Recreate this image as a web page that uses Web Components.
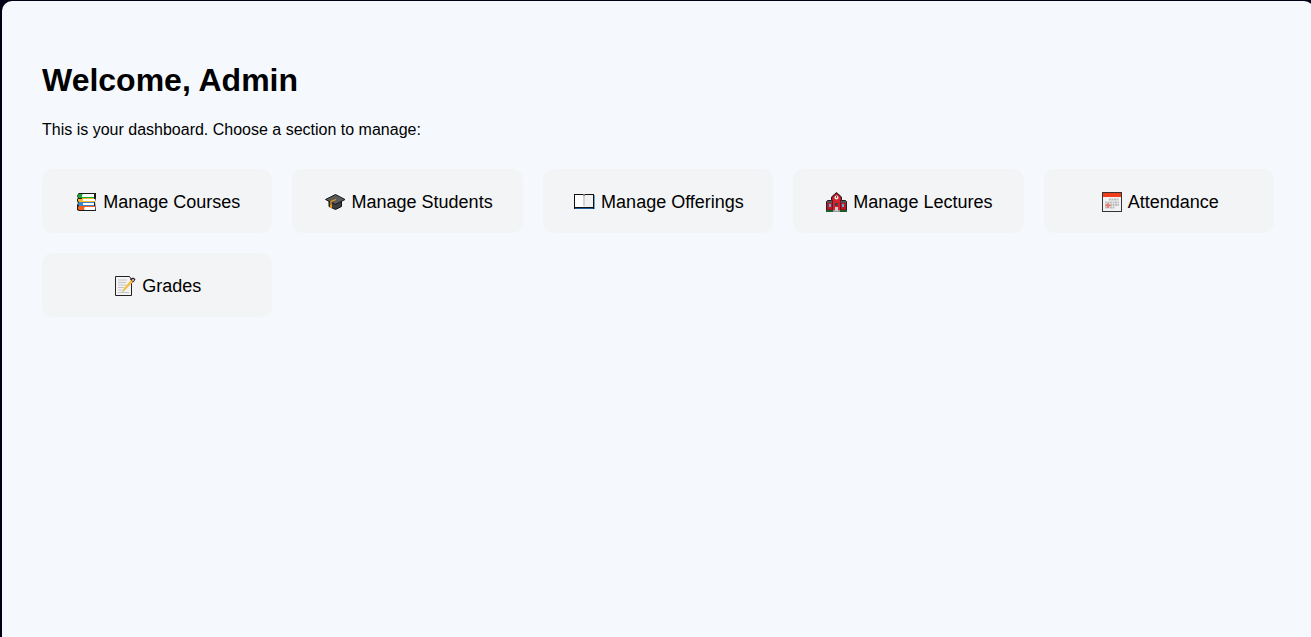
<!DOCTYPE html>
<html lang="en">
<head>
<meta charset="utf-8">
<title>Admin Dashboard</title>
<style>
  html { background: #020014; }
  body { margin: 0; min-height: 100vh; overflow: hidden; display: flex; font-family: "Liberation Sans", Arial, sans-serif; color: #000; }
  dashboard-panel { flex: 1; }
</style>
</head>
<body>
<dashboard-panel>
  <span slot="title">Welcome, Admin</span>
  <span slot="intro">This is your dashboard. Choose a section to manage:</span>
  <section-card icon="books" href="#courses">Manage Courses</section-card>
  <section-card icon="cap" href="#students">Manage Students</section-card>
  <section-card icon="book" href="#offerings">Manage Offerings</section-card>
  <section-card icon="school" href="#lectures">Manage Lectures</section-card>
  <section-card icon="calendar" href="#attendance">Attendance</section-card>
  <section-card icon="memo" href="#grades">Grades</section-card>
</dashboard-panel>

<script>
const icons = {
  books: `
    <path d="M5 2h17v5l-1 4 1 9H5l-2-1v-5l1-2-1-2V8l1-1-1-2 1-2z" fill="#1a1a1a"/>
    <path d="M8 3h12v3H8z" fill="#fff"/><path d="M5 3h4l-1 1v2h12v1H5L4 6V4z" fill="#19a832"/>
    <path d="M8 8h13v2H8z" fill="#fff"/><path d="M4 8h5v2h12v1H5l-1-1zM8 7h12v1H8z" fill="#f5b92a"/>
    <path d="M8 12h12v2H8z" fill="#fff"/><path d="M5 11h15v1H9v2h11v1H5l-1-2z" fill="#3a86c8"/>
    <path d="M9 16h12v3H9z" fill="#fff"/><path d="M5 15h16v1H11l-1 1v1l1 1H5l-1-1v-2z" fill="#f4601c"/>`,
  cap: `
    <path d="M6 9v6.500l6.500 3 6-3V9z" fill="#3d3d3d" stroke="#111"/>
    <path d="M2.500 8.500l10-5 9.500 5-9.500 5z" fill="#5a5a5a" stroke="#161616" stroke-linejoin="round"/>
    <path d="M13 8.500l-5 2v5" fill="none" stroke="#e59a18" stroke-width="1.300"/><path d="M7 14h2v3H7z" fill="#e59a18"/>`,
  book: `
    <path d="M2 3h9l1 1 1-1h9v15H2z" fill="#111"/><path d="M3 17h18v1H3z" fill="#1d5f9c"/>
    <path d="M22 4h1v14h-1z" fill="#6ca6d2"/>
    <path d="M3 4h8l1 1v11H3z" fill="#fff"/><path d="M12 5l1-1h8v12h-9z" fill="#f1f1f1"/>
    <path d="M11 5h2v10h-2z" fill="#d4d4d4"/>`,
  school: `
    <path d="M2.500 20.500V10.500l1-1H7.500V6l5-4.500 5 4.500v3.500h4l1 1v10z" fill="#9e1420" stroke="#222"/>
    <path d="M8.500 7l4-4 4 4v12h-8z" fill="#d9202f"/>
    <path d="M3 10h5v2H3zM17 10h5v2h-5z" fill="#555"/>
    <path d="M3 12h5v6H3zM17 12h5v6h-5z" fill="#bd1826"/>
    <path d="M8 9h1v10H8zM16 9h1v10h-1z" fill="#6a1720"/>
    <path d="M2 19h21v2H2z" fill="#1e5c2a"/><path d="M9 19h7v2H9z" fill="#999"/>
    <circle cx="12.500" cy="6.500" r="2" fill="#eee"/><path d="M12 5h1v2h-1z" fill="#a33"/>
    <path d="M11 12h3v3h-3z" fill="#444"/><path d="M11 16h3v4h-3z" fill="#ccc"/>
    <path d="M5 13h2v3H5zM18 13h2v3h-2z" fill="#58b4df"/>`,
  calendar: `
    <path d="M3 1h20v20H3z" fill="#333"/><path d="M4 2h18v4H4z" fill="#ef3c1a"/>
    <path d="M4 6h18v14H4z" fill="#f2f2f2"/>
    <path d="M10 8.500h10M6 11.500h14M6 14h14M6 16.500h10" stroke="#bdbdbd" stroke-width="2" stroke-dasharray="2 .5"/>
    <path d="M9 12v5M6.500 14.500h5" stroke="#f07060" stroke-width="1.500"/>`,
  memo: `
    <path d="M2.500 1.500h14l2 3v16h-16z" fill="#f3f3f3" stroke="#222"/>
    <path d="M5 5h9M5 7.500h8M5 10h8M5 12.500h6M5 15h4M5 17.500h11" stroke="#c4c4c4"/>
    <path d="M17 4l3-1.500 2.500 1.500-1 2-2 2z" fill="#222"/>
    <path d="M10 16l1-3 7-8 2 2-8 8z" fill="#f6bd42"/>
    <path d="M19 4h2v2h-2z" fill="#d99aa0"/><path d="M9 17l1-3 2 2z" fill="#dfba80"/>`
};

customElements.define('section-icon', class extends HTMLElement {
  connectedCallback() {
    this.attachShadow({ mode: 'open' }).innerHTML = `
      <style>
        :host { display: block; width: 25px; height: 22px; }
        svg { display: block; }
      </style>
      <svg width="25" height="22" viewBox="0 0 25 22" aria-hidden="true">${icons[this.getAttribute('name')]}</svg>`;
  }
});

customElements.define('section-card', class extends HTMLElement {
  connectedCallback() {
    this.attachShadow({ mode: 'open' }).innerHTML = `
      <style>
        :host { display: block; }
        a { display: flex; align-items: center; justify-content: center; gap: 4px; padding: 21px 20px 19px;
            border-radius: 10px; background: #f3f4f6; color: inherit; font-size: 18px; line-height: 24px;
            text-decoration: none; white-space: nowrap; }
        a:hover { background: #e5e7eb; }
      </style>
      <a href="${this.getAttribute('href')}"><section-icon name="${this.getAttribute('icon')}"></section-icon><span><slot></slot></span></a>`;
  }
});

customElements.define('dashboard-panel', class extends HTMLElement {
  connectedCallback() {
    this.attachShadow({ mode: 'open' }).innerHTML = `
      <style>
        :host { display: block; box-sizing: border-box; margin: 1px -3px -10px 2px; padding: 60px 40px 40px;
                border-radius: 10px; background: #f5f9fe; }
        h1 { margin: 0 0 21px; font-size: 32px; line-height: 38px; }
        p { margin: 0 0 29px; font-size: 16px; line-height: 20px; }
        nav { display: grid; grid-template-columns: repeat(auto-fit, minmax(220px, 1fr)); gap: 20px; }
      </style>
      <main>
        <h1><slot name="title"></slot></h1>
        <p><slot name="intro"></slot></p>
        <nav aria-label="Sections"><slot></slot></nav>
      </main>`;
  }
});
</script>
</body>
</html>
